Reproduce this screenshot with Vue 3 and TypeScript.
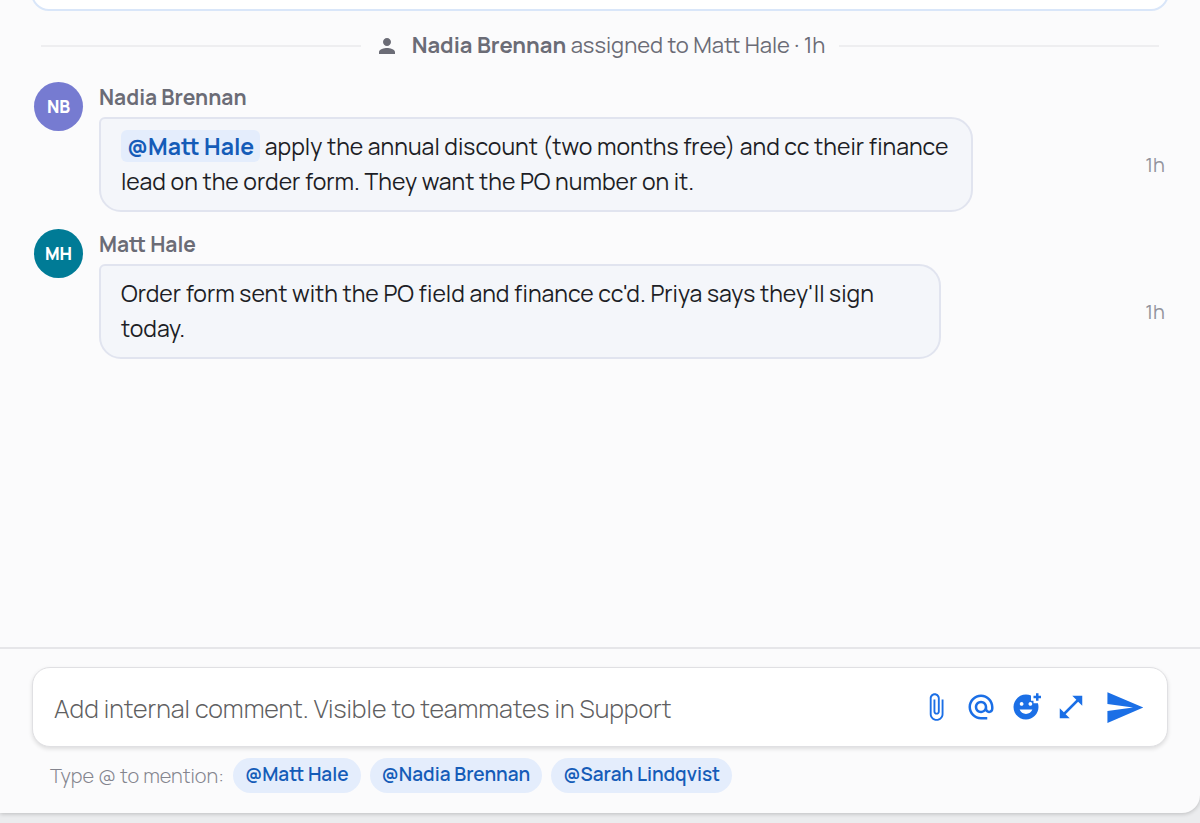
<script setup lang="ts">
import { ref } from 'vue'

interface Message {
  id: number
  author: string
  initials: string
  tone: string
  size: string
  mention?: string
  text: string
  time: string
}

const messages: Message[] = [
  {
    id: 1,
    author: 'Nadia Brennan',
    initials: 'NB',
    tone: 'violet',
    size: 'wide',
    mention: '@Matt Hale',
    text: ' apply the annual discount (two months free) and cc their finance\nlead on the order form. They want the PO number on it.',
    time: '1h',
  },
  {
    id: 2,
    author: 'Matt Hale',
    initials: 'MH',
    tone: 'teal',
    size: 'medium',
    text: "Order form sent with the PO field and finance cc'd. Priya says they'll sign\ntoday.",
    time: '1h',
  },
]

const people: string[] = ['Matt Hale', 'Nadia Brennan', 'Sarah Lindqvist']

const tools = [
  {
    label: 'Attach file',
    path: 'M16.5 6v11.5c0 2.21-1.79 4-4 4s-4-1.79-4-4V5c0-1.38 1.12-2.5 2.5-2.5s2.5 1.12 2.5 2.5v10.5c0 .55-.45 1-1 1s-1-.45-1-1V6H10v9.5c0 1.38 1.12 2.5 2.5 2.5s2.5-1.12 2.5-2.5V5c0-2.21-1.79-4-4-4S7 2.79 7 5v12.5c0 3.04 2.46 5.5 5.5 5.5s5.5-2.46 5.5-5.5V6h-1.5z',
  },
  {
    label: 'Mention',
    path: 'M12 1.95c-5.52 0-10 4.48-10 10s4.48 10 10 10h5v-2h-5c-4.34 0-8-3.66-8-8s3.66-8 8-8 8 3.66 8 8v1.43c0 .79-.71 1.57-1.5 1.57s-1.5-.78-1.5-1.57v-1.43c0-2.76-2.24-5-5-5s-5 2.24-5 5 2.24 5 5 5c1.38 0 2.64-.56 3.54-1.47.65.89 1.77 1.47 2.96 1.47 1.97 0 3.5-1.6 3.5-3.57v-1.43c0-5.52-4.48-10-10-10zm0 13c-1.66 0-3-1.34-3-3s1.34-3 3-3 3 1.34 3 3-1.34 3-3 3z',
  },
  {
    label: 'Add emoji',
    path: 'M18 9V7h-2V2.84C14.77 2.3 13.42 2 11.99 2 6.47 2 2 6.48 2 12s4.47 10 9.99 10C17.52 22 22 17.52 22 12c0-1.05-.17-2.05-.47-3H18zM15.5 8c.83 0 1.5.67 1.5 1.5s-.67 1.5-1.5 1.5-1.5-.67-1.5-1.5.67-1.5 1.5-1.5zm-7 0c.83 0 1.5.67 1.5 1.5S9.33 11 8.5 11 7 10.33 7 9.5 7.67 8 8.5 8zm3.5 9.5c-2.33 0-4.31-1.46-5.11-3.5h10.22c-.8 2.04-2.78 3.5-5.11 3.5zM22 3h2v2h-2v2h-2V5h-2V3h2V1h2v2z',
  },
  {
    label: 'Expand editor',
    path: 'M21 11V3h-8l3.29 3.29-10 10L3 13v8h8l-3.29-3.29 10-10z',
  },
]

const draft = ref('')

function mention(name: string) {
  draft.value += `@${name} `
}
</script>

<template>
  <div class="page">
    <main class="panel">
      <section class="thread">
        <div class="card"></div>

        <div class="event">
          <svg class="person" viewBox="0 0 24 24" aria-hidden="true">
            <path d="M12 12c2.21 0 4-1.79 4-4s-1.79-4-4-4-4 1.79-4 4 1.79 4 4 4zm0 2c-2.67 0-8 1.34-8 4v2h16v-2c0-2.66-5.33-4-8-4z" />
          </svg>
          <span class="event-text"><strong>Nadia Brennan</strong> assigned to Matt Hale · 1h</span>
        </div>

        <article v-for="m in messages" :key="m.id" class="message">
          <div class="avatar" :class="m.tone">{{ m.initials }}</div>
          <div class="body">
            <h2 class="author">{{ m.author }}</h2>
            <div class="row">
              <p class="bubble" :class="m.size"><span v-if="m.mention" class="mention">{{ m.mention }}</span>{{ m.text }}</p>
              <time class="time">{{ m.time }}</time>
            </div>
          </div>
        </article>
      </section>

      <form class="composer" @submit.prevent>
        <div class="box">
          <input
            v-model="draft"
            class="field"
            type="text"
            aria-label="Internal comment"
            placeholder="Add internal comment. Visible to teammates in Support"
          />
          <div class="tools">
            <button v-for="t in tools" :key="t.label" class="tool" type="button" :aria-label="t.label">
              <svg viewBox="0 0 24 24" aria-hidden="true"><path :d="t.path" /></svg>
            </button>
          </div>
          <button class="tool send" type="submit" aria-label="Send">
            <svg viewBox="0 0 24 24" aria-hidden="true"><path d="M2.01 21L23 12 2.01 3 2 10l15 2-15 2z" /></svg>
          </button>
        </div>
        <div class="hints">
          <span class="hint">Type @ to mention:</span>
          <button v-for="p in people" :key="p" class="chip" type="button" @click="mention(p)">@{{ p }}</button>
        </div>
      </form>
    </main>
  </div>
</template>

<style>
body {
  margin: 0;
  background: #ebecee;
}
</style>

<style scoped>
.page {
  box-sizing: border-box;
  height: 100vh;
  padding-bottom: 10px;
  overflow: hidden;
  font-family: Manrope, Inter, 'Liberation Sans', sans-serif;
  color: #1d1e26;
}

.panel {
  display: flex;
  flex-direction: column;
  height: 100%;
  overflow: hidden;
  background: #fbfbfc;
  border-radius: 0 0 18px 0;
  box-shadow: 0 1px 4px rgba(0, 0, 0, 0.2);
}

.thread {
  flex: 1;
  min-height: 0;
  padding: 0 32px;
  overflow: hidden;
}

.card {
  box-sizing: border-box;
  height: 40px;
  margin: -29px -1px 0;
  background: #fff;
  border: 2px solid #d9e6f9;
  border-radius: 18px;
}

.event {
  display: flex;
  align-items: center;
  height: 30px;
  margin: 20px 9px 0;
  font-size: 22px;
  line-height: 28px;
  font-weight: 400;
  color: #6b6c76;
  white-space: nowrap;
}

.event::before,
.event::after {
  content: '';
  flex: 1;
  height: 2px;
  background: #eeeef0;
}

.event::before {
  margin-right: 14px;
}

.event::after {
  margin-left: 14px;
}

.person {
  width: 24px;
  height: 24px;
  margin-right: 13px;
  fill: #6b6c76;
}

.event-text {
  padding-bottom: 2px;
}

.event strong {
  font-weight: 700;
}

.message {
  display: flex;
  gap: 16px;
  padding: 0 3px 0 2px;
  margin-top: 17px;
}

.event + .message {
  margin-top: 21px;
}

.avatar {
  flex: none;
  width: 49px;
  height: 49px;
  border-radius: 50%;
  font-size: 17px;
  line-height: 49px;
  font-weight: 800;
  text-align: center;
  color: #fff;
}

.violet {
  background: #767bd1;
}

.teal {
  background: #007b96;
}

.body {
  flex: 1;
  min-width: 0;
}

.author {
  margin: 0 0 5px;
  font-size: 21px;
  line-height: 30px;
  font-weight: 700;
  color: #6b6c76;
}

.row {
  display: flex;
  align-items: center;
  justify-content: space-between;
}

.bubble {
  box-sizing: border-box;
  margin: 0;
  padding: 10px 20px 11px;
  background: #f4f6fa;
  border: 2px solid #e1e4ef;
  border-radius: 6px 22px 22px 22px;
  font-size: 23px;
  line-height: 35px;
  font-weight: 400;
  white-space: pre-line;
}

.wide {
  width: 82%;
}

.medium {
  width: 79%;
}

.mention {
  padding: 0 6px;
  background: #e4edfc;
  border-radius: 6px;
  font-weight: 700;
  color: #155cb8;
}

.time {
  font-size: 20px;
  font-weight: 400;
  color: #93949c;
}

.composer {
  padding: 18px 32px 20px;
  border-top: 2px solid #e6e6e9;
}

.box {
  box-sizing: border-box;
  display: flex;
  align-items: center;
  height: 80px;
  padding: 0 22px 0 21px;
  background: #fff;
  border: 1px solid #e0e0e3;
  border-radius: 18px;
  box-shadow: 0 2px 4px rgba(0, 0, 0, 0.12);
}

.field {
  flex: 1;
  min-width: 0;
  padding: 4px 0 0;
  background: none;
  border: 0;
  outline: 0;
  font: 300 25px/32px Manrope, Inter, 'Liberation Sans', sans-serif;
  color: #1d1e26;
}

.field::placeholder {
  color: #5f5f62;
  opacity: 1;
}

.tools {
  display: flex;
  gap: 15px;
}

.tool {
  padding: 0;
  background: none;
  border: 0;
  cursor: pointer;
}

.tool svg {
  display: block;
  width: 30px;
  height: 30px;
  fill: #1b6fe6;
}

.send {
  margin-left: 18px;
}

.send svg {
  width: 41px;
  height: 41px;
}

.hints {
  display: flex;
  align-items: center;
  gap: 9px;
  padding-left: 18px;
  margin-top: 11px;
}

.hint {
  font-size: 20px;
  line-height: 28px;
  font-weight: 300;
  color: #84858e;
}

.chip {
  height: 35px;
  padding: 0 12px 3px;
  background: #e4edfc;
  border: 0;
  border-radius: 18px;
  font: 600 19px/24px Manrope, Inter, 'Liberation Sans', sans-serif;
  color: #155cb8;
  cursor: pointer;
}
</style>
